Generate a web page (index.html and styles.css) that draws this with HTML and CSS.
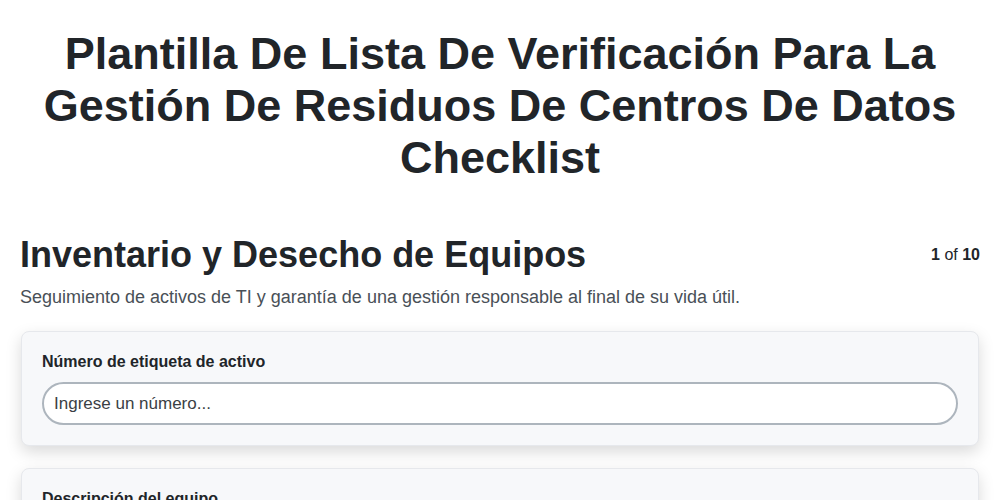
FILE: index.html
```html
<!DOCTYPE html>
<html lang="es">
<head>
<meta charset="utf-8">
<title>Checklist</title>
<link rel="stylesheet" href="styles.css">
</head>
<body>
<div class="page">
  <h1 class="title">Plantilla De Lista De Verificación Para La Gestión De Residuos De Centros De Datos Checklist</h1>
  <div class="section-head">
    <h2 class="section-title">Inventario y Desecho de Equipos</h2>
    <div class="pager"><b>1</b> of <b>10</b></div>
  </div>
  <p class="section-desc">Seguimiento de activos de TI y garantía de una gestión responsable al final de su vida útil.</p>
  <div class="card">
    <label class="field-label" for="asset">Número de etiqueta de activo</label>
    <input class="field-input" id="asset" type="text" placeholder="Ingrese un número...">
  </div>
  <div class="card">
    <label class="field-label" for="desc">Descripción del equipo</label>
    <input class="field-input" id="desc" type="text" placeholder="Ingrese una descripción...">
  </div>
</div>
</body>
</html>
```
FILE: styles.css
```css
* { box-sizing: border-box; }
html, body { margin: 0; padding: 0; background: #ffffff; }
body {
  font-family: "Liberation Sans", Arial, sans-serif;
  color: #212529;
}
.page {
  padding: 28px 20px 0 20px;
}
.title {
  margin: 0;
  text-align: center;
  font-size: 45px;
  line-height: 52px;
  font-weight: 700;
  color: #212529;
}
.section-head {
  display: flex;
  justify-content: space-between;
  align-items: center;
  margin-top: 49px;
}
.section-title {
  margin: 0;
  font-size: 36px;
  line-height: 43px;
  font-weight: 700;
}
.pager {
  font-size: 16px;
  line-height: 19px;
  color: #212529;
}
.section-desc {
  margin: 8px 0 20px;
  font-size: 18px;
  line-height: 27px;
  color: #495057;
}
.card {
  margin: 0 1px 22px 1px;
  padding: 20px;
  background: #f7f8fa;
  border: 1px solid #e6e8ec;
  border-radius: 8px;
  box-shadow: 0 6px 16px rgba(0, 0, 0, 0.15);
}
.field-label {
  display: block;
  margin-bottom: 11px;
  font-size: 16px;
  line-height: 19px;
  font-weight: 700;
  color: #212529;
}
.field-input {
  display: block;
  width: 100%;
  height: 43px;
  padding: 0 10px;
  font-family: "Liberation Sans", Arial, sans-serif;
  font-size: 17px;
  color: #212529;
  background: #ffffff;
  border: 2px solid #adb5bd;
  border-radius: 22px;
  outline: none;
}
.field-input::placeholder { color: #3a3f44; opacity: 1; }
```
